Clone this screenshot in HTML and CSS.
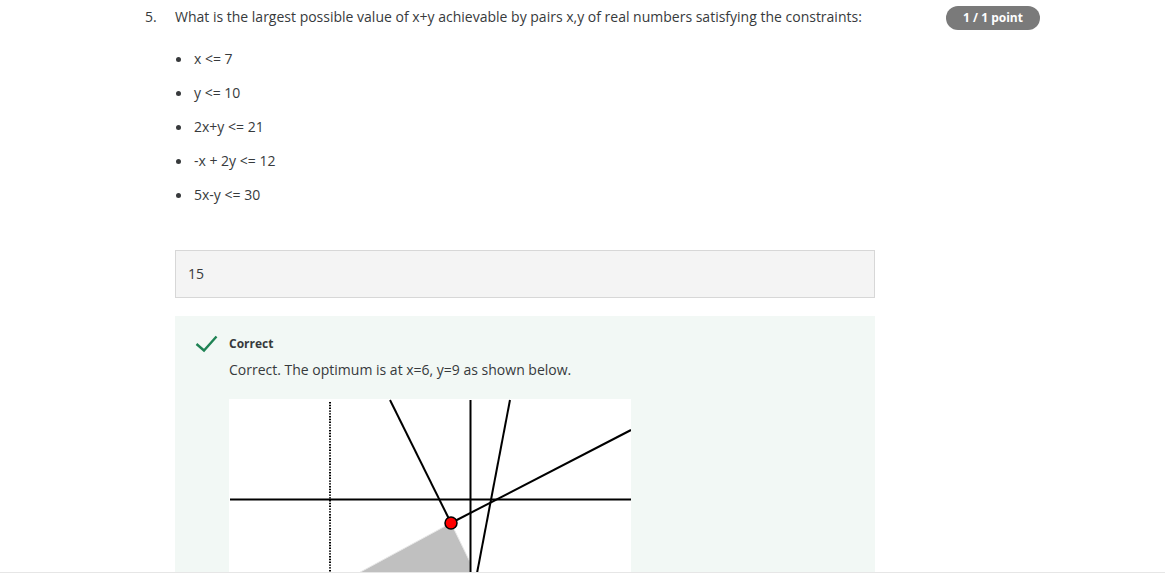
FILE: index.html
```html
<!DOCTYPE html>
<html lang="en">
<head>
<meta charset="utf-8">
<title>Quiz question 5</title>
<link rel="stylesheet" href="styles.css">
</head>
<body>
<main class="question">
  <div class="qnum">5.</div>
  <div class="qbody">
    <p class="prompt">What is the largest possible value of x+y achievable by pairs x,y of real numbers satisfying the constraints:</p>
    <ul class="constraints">
      <li>x &lt;= 7</li>
      <li>y &lt;= 10</li>
      <li>2x+y &lt;= 21</li>
      <li>-x + 2y &lt;= 12</li>
      <li>5x-y &lt;= 30</li>
    </ul>
    <div class="answer">15</div>
    <section class="feedback">
      <svg class="check" width="24" height="24" viewBox="0 0 24 24" aria-hidden="true">
        <polyline points="1.5,10 9,16.5 21.5,2.5" fill="none" stroke="#1f8354" stroke-width="2.4" stroke-linejoin="miter"/>
      </svg>
      <div class="fb-text">
        <div class="fb-title">Correct</div>
        <p class="fb-expl">Correct. The optimum is at x=6, y=9 as shown below.</p>
        <svg class="plot" width="402" height="300" viewBox="0 0 402 300" aria-label="Feasible region plot">
          <rect x="0" y="0" width="402" height="300" fill="#fff"/>
          <polygon points="222,124 100,190 241,190 241,163" fill="#c0c0c0" stroke="#e8e8e8" stroke-width="1"/>
          <line x1="101" y1="3" x2="101" y2="300" stroke="#000" stroke-width="2" stroke-dasharray="1.4,1.4"/>
          <line x1="1" y1="100.5" x2="402" y2="100.5" stroke="#000" stroke-width="2"/>
          <line x1="241.5" y1="1" x2="241.5" y2="300" stroke="#000" stroke-width="2"/>
          <line x1="161" y1="1" x2="222" y2="124" stroke="#000" stroke-width="2"/>
          <line x1="222" y1="124" x2="402" y2="31" stroke="#000" stroke-width="2"/>
          <line x1="281" y1="1" x2="245" y2="190" stroke="#000" stroke-width="2"/>
          <circle cx="222" cy="124" r="6" fill="#ff0000" stroke="#000" stroke-width="1.5"/>
        </svg>
      </div>
    </section>
  </div>
  <div class="score">1 / 1 point</div>
</main>
<div class="bottom-edge"></div>
</body>
</html>
```

FILE: styles.css
```css
html, body {
  margin: 0;
  padding: 0;
  background: #fff;
  overflow: hidden;
}

body {
  font-family: "Open Sans", "Noto Sans", sans-serif;
  font-size: 14px;
  line-height: 20px;
  color: #373a3c;
}

.question {
  display: flex;
  align-items: flex-start;
  padding: 7px 125px 0 145px;
}

.qnum {
  width: 30px;
  flex: none;
}

.qbody {
  width: 700px;
  flex: none;
}

.prompt {
  margin: 0;
}

.constraints {
  list-style: none;
  margin: 22px 0 0;
  padding: 0;
  display: flex;
  flex-direction: column;
  gap: 14px;
}

.constraints li {
  display: flex;
  align-items: center;
  gap: 13px;
  padding-left: 1px;
}

.constraints li::before {
  content: "";
  width: 5px;
  height: 5px;
  border-radius: 50%;
  background: #373a3c;
  flex: none;
}

.answer {
  margin-top: 45px;
  height: 46px;
  box-sizing: content-box;
  border: 1px solid #d7d7d7;
  background: #f4f4f4;
  padding: 0 12px;
  display: flex;
  align-items: center;
}

.feedback {
  margin-top: 18px;
  background: #f2f8f5;
  display: flex;
  align-items: flex-start;
  gap: 10px;
  padding: 19px 20px 20px 20px;
}

.check {
  flex: none;
  margin-top: -1px;
}

.fb-text {
  display: flex;
  flex-direction: column;
}

.fb-title {
  font-size: 12px;
  font-weight: 700;
  line-height: 18px;
}

.fb-expl {
  margin: 7px 0 0;
  line-height: 20px;
}

.plot {
  display: block;
  margin-top: 19px;
}

.score {
  margin-left: auto;
  margin-top: -1px;
  width: 94px;
  height: 24px;
  border-radius: 12px;
  background: #7a7a7a;
  color: #fff;
  font-size: 12px;
  font-weight: 700;
  display: flex;
  align-items: center;
  justify-content: center;
  flex: none;
}

.bottom-edge {
  position: fixed;
  left: 0;
  right: 0;
  bottom: 0;
  height: 1px;
  background: #e6e6e6;
}
```
